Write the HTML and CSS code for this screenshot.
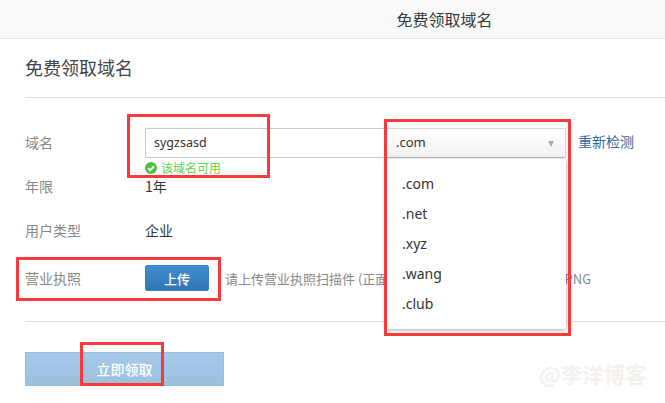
FILE: index.html
```html
<!DOCTYPE html>
<html lang="zh">
<head>
<meta charset="utf-8">
<title>免费领取域名</title>
<link rel="stylesheet" href="styles.css">
</head>
<body>
<header class="topbar"><span class="topbar-title">免费领取域名</span></header>
<main class="panel">
  <h1 class="panel-title">免费领取域名</h1>
  <div class="form">
    <div class="row row-domain">
      <span class="label">域名</span>
      <div class="domain-field">
        <div class="domain-controls">
          <div class="input">sygzsasd</div>
          <div class="select">.com<span class="caret"></span></div>
          <a class="recheck">重新检测</a>
        </div>
        <div class="ok">
          <svg class="ok-icon" viewBox="0 0 12 12" width="12" height="12"><circle cx="6" cy="6" r="6" fill="#4cc13f"/><path d="M3 6.2 5.2 8.4 9 4.2" fill="none" stroke="#fff" stroke-width="1.8"/></svg>
          <span>该域名可用</span>
        </div>
      </div>
    </div>
    <div class="row row-year"><span class="label">年限</span><span class="value">1年</span></div>
    <div class="row row-type"><span class="label">用户类型</span><span class="value">企业</span></div>
    <div class="row row-license">
      <span class="label">营业执照</span>
      <button class="upload">上传</button>
      <span class="hint">请上传营业执照扫描件 (正面，大小不超过2M)，格式JPG、PNG</span>
    </div>
  </div>
  <div class="submit-area"><button class="submit">立即领取</button></div>
</main>
<ul class="dropdown">
  <li>.com</li><li>.net</li><li>.xyz</li><li>.wang</li><li>.club</li>
</ul>
<div class="mark mark-domain"></div>
<div class="mark mark-select"></div>
<div class="mark mark-license"></div>
<div class="mark mark-submit"></div>
<div class="watermark">@李洋博客</div>
</body>
</html>
```
FILE: styles.css
```css
* { box-sizing: border-box; }
html, body { margin: 0; padding: 0; }
body {
  width: 665px; height: 403px; overflow: hidden; position: relative; background: #fff;
  font-family: "Noto Sans", "Noto Sans CJK SC", sans-serif; color: #333;
}
.topbar {
  height: 39px; background: #f8f9fb; border-bottom: 1px solid #e4e4ea;
  display: flex; justify-content: center; align-items: center;
  padding-left: 224px;
}
.topbar-title { font-size: 16px; line-height: 38px; color: #3a3a3a; font-family: "Noto Sans CJK SC", sans-serif; }
.panel { padding-left: 25px; }
.panel-title {
  margin: 0; height: 59px; border-bottom: 1px solid #e0e0e0;
  font-size: 18px; font-weight: 400; line-height: 57px; color: #444;
  font-family: "Noto Sans CJK SC", sans-serif;
}
.form { height: 224px; border-bottom: 1px solid #e0e0e0; padding-top: 30px; }
.row { display: flex; align-items: flex-start; }
.label { width: 120px; flex: none; font-size: 14px; color: #888; line-height: 29px; font-family: "Noto Sans CJK SC", sans-serif; }
.value { font-size: 14px; color: #333; line-height: 29px; font-family: "Noto Sans CJK SC", sans-serif; }
.row-domain { height: 44px; }
.row-year { height: 44px; }
.row-type { height: 47px; }
.domain-controls { display: flex; align-items: flex-start; }
.input {
  width: 241px; height: 30px; border: 1px solid #c8c8c8; border-right: 0; border-radius: 2px 0 0 2px;
  font-size: 12.5px; line-height: 27px; padding-left: 8px; color: #333;
}
.select {
  width: 180px; height: 30px; border: 1px solid #d4d4d4; border-bottom-color: #bbb; border-radius: 0 2px 2px 0;
  background: linear-gradient(#fff, #f2f2f2);
  font-size: 13px; line-height: 27px; padding-left: 9px; position: relative; color: #333;
}
.caret {
  position: absolute; right: 11px; top: 12px; width: 0; height: 0;
  border-left: 3.5px solid transparent; border-right: 3.5px solid transparent; border-top: 6px solid #aaa;
}
.recheck { margin-left: 12px; font-size: 14px; line-height: 26px; color: #2a6a9f; font-family: "Noto Sans CJK SC", sans-serif; white-space: nowrap; }
.ok { display: flex; align-items: center; gap: 4px; height: 19px; font-size: 12px; color: #5fd24f; font-family: "Noto Sans CJK SC", sans-serif; }
.ok-icon { flex: none; }
.row-license { height: 30px; align-items: center; white-space: nowrap; }
.upload {
  width: 64px; height: 26px; padding: 0; border: 1px solid #3a80c4; border-radius: 2px;
  background: linear-gradient(#428ed2, #2f75b5); color: #fff; font-size: 13px;
  font-family: "Noto Sans CJK SC", sans-serif; font-weight: 500;
}
.hint { margin-left: 16px; font-size: 13px; color: #888; font-family: "Noto Sans CJK SC", sans-serif; }
.submit-area { padding-top: 30px; }
.submit {
  display: block; width: 199px; height: 34px; padding: 0; border: 1px solid #95bedd;
  background: linear-gradient(#a5caea, #9cc0de); color: #fff; font-size: 14px;
  font-family: "Noto Sans CJK SC", sans-serif; font-weight: 500;
}
.dropdown {
  position: absolute; left: 386px; top: 159px; width: 180px; height: 170px;
  margin: 0; padding: 10px 0 0 16px; list-style: none; background: #fff;
  border-radius: 2px; box-shadow: 0 1px 4px rgba(0,0,0,.35);
  font-size: 14px; color: #333;
}
.dropdown li { height: 30px; line-height: 30px; }
.mark { position: absolute; border: 3px solid #f83a3a; }
.mark-domain { left: 127px; top: 114px; width: 143px; height: 64px; }
.mark-select { left: 384px; top: 119px; width: 187px; height: 217px; }
.mark-license { left: 16px; top: 257px; width: 205px; height: 44px; }
.mark-submit { left: 80px; top: 342px; width: 84px; height: 44px; }
.watermark {
  position: absolute; left: 539px; top: 362px; font-size: 21.5px; font-weight: 700; line-height: 24px;
  color: #f4f1ee; font-family: "Noto Sans CJK SC", sans-serif; white-space: nowrap;
}
```
